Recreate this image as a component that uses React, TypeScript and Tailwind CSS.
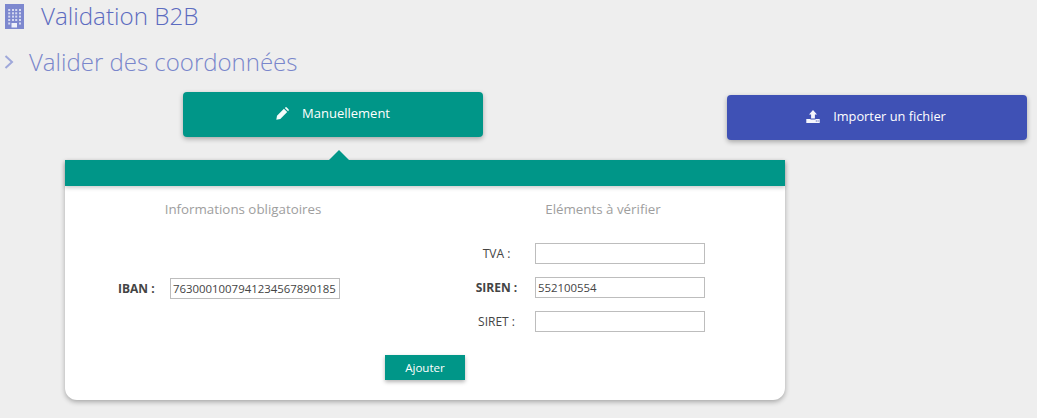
import React from "react";

const Building = () => (
  <svg width="19" height="25" viewBox="0 0 19 25" className="block">
    <rect x="0" y="0" width="19" height="25" fill="#7d88cf" />
    {[5, 8.3, 11.6, 15].map((y) =>
      [3.2, 7, 10.2, 14].map((x) => (
        <rect key={`${x}-${y}`} x={x} y={y} width="2" height="2" fill="#d5d9f0" />
      ))
    )}
    {[3.2, 14].map((x) => (
      <rect key={x} x={x} y="18.5" width="2" height="2" fill="#d5d9f0" />
    ))}
    <rect x="6.5" y="19" width="5.5" height="4.5" fill="#eef0fa" />
  </svg>
);

const Pencil = () => (
  <svg width="13" height="13" viewBox="0 0 13 13" className="block">
    <path d="M0.3 12.7 L1 8.7 L7.9 1.8 L11.2 5.1 L4.3 12 Z M8.8 0.9 L9.5 0.3 Q10 0 10.6 0.3 L12.7 2.4 Q13 3 12.7 3.5 L12.1 4.2 Z" fill="#f6fcfb" />
  </svg>
);

const Upload = () => (
  <svg width="14" height="13" viewBox="0 0 14 13" className="block">
    <path d="M7 0 L11 4.4 L8.9 4.4 L8.9 8.4 L5.1 8.4 L5.1 4.4 L3 4.4 Z" fill="#f5f6fc" />
    <path fillRule="evenodd" d="M0.3 9 L4.5 9 L4.5 9.6 L9.5 9.6 L9.5 9 L13.7 9 L13.7 13 L0.3 13 Z M9.8 10.6 h1 v1 h-1 Z M11.6 10.6 h1 v1 h-1 Z" fill="#f5f6fc" />
  </svg>
);

const Field = ({ label, value = "", bold = false }: { label: string; value?: string; bold?: boolean }) => (
  <div className="flex items-center h-[21px]">
    <div className={`w-[75px] mr-[1px] text-center text-[12px] leading-[21px] text-[#444] ${bold ? "font-bold" : ""}`}>{label}</div>
    <input
      readOnly
      value={value}
      className="w-[170px] h-[21px] border border-[#bdbdbd] bg-white px-[2px] text-[11.4px] text-[#444] outline-none"
    />
  </div>
);

export default function App() {
  return (
    <div className="w-[1037px] h-[418px] overflow-hidden bg-[#eeeeee] font-['Open_Sans','Noto_Sans',sans-serif]">
      <div className="flex items-center pl-[5px] pt-[4px] h-[28px]">
        <Building />
        <h1 className="ml-[17px] text-[24.2px] leading-[28px] font-light text-[#5c6bc0]">Validation B2B</h1>
      </div>
      <div className="flex items-center pl-[4px] mt-[16px] h-[36px]">
        <svg width="10" height="14" viewBox="0 0 10 14" className="block">
          <path d="M1.5 1 L8 7 L1.5 13" fill="none" stroke="#9fa8da" strokeWidth="2" />
        </svg>
        <h2 className="ml-[15px] text-[24px] leading-[36px] font-light text-[#7986cb]">Valider des coordonnées</h2>
      </div>
      <div className="flex items-start mt-[12px] h-[68px] pl-[183px]">
        <button className="flex items-center justify-center gap-[13px] w-[300px] h-[45px] pb-[2px] rounded-[4px] bg-[#009688] text-white text-[13px] shadow-[0_2px_5px_rgba(0,0,0,0.3)]">
          <Pencil />
          <span>Manuellement</span>
        </button>
        <button className="ml-[244px] mt-[3px] flex items-center justify-center gap-[13px] w-[300px] h-[45px] pb-[2px] pr-[2px] rounded-[4px] bg-[#3f51b5] text-white text-[12.8px] shadow-[0_2px_5px_rgba(0,0,0,0.3)]">
          <Upload />
          <span>Importer un fichier</span>
        </button>
      </div>
      <div className="relative ml-[65px] w-[720px] h-[240px] bg-white rounded-b-[12px] shadow-[0_2px_5px_rgba(0,0,0,0.3)]">
        <div className="absolute left-[264px] top-[-10px] w-0 h-0 border-x-[10px] border-x-transparent border-b-[10px] border-b-[#009688]" />
        <div className="h-[26px] bg-[#009688] shadow-[0_2px_4px_rgba(0,0,0,0.2)]" />
        <div className="flex pt-[14px]">
          <div className="w-[356px] flex flex-col">
            <div className="text-center text-[13.33px] leading-[18px] text-[#9e9e9e]">Informations obligatoires</div>
            <div className="flex items-center h-[21px] mt-[60px] pl-[53px]">
              <span className="text-[12px] font-bold text-[#444] w-[52px]">IBAN :</span>
              <input
                readOnly
                value="7630001007941234567890185"
                className="w-[170px] h-[21px] border border-[#bdbdbd] bg-white px-[2px] text-[11.4px] text-[#444] outline-none"
              />
            </div>
          </div>
          <div className="w-[364px] flex flex-col pl-[38px]">
            <div className="w-[288px] text-center text-[13.33px] leading-[18px] text-[#9e9e9e]">Eléments à vérifier</div>
            <div className="flex flex-col gap-[13px] mt-[25px]">
              <Field label="TVA :" />
              <Field label="SIREN :" value="552100554" bold />
              <Field label="SIRET :" />
            </div>
          </div>
        </div>
        <div className="flex justify-center mt-[23px]">
          <button className="w-[80px] h-[25px] bg-[#009688] text-white text-[11.6px] shadow-[0_2px_4px_rgba(0,0,0,0.3)]">Ajouter</button>
        </div>
      </div>
    </div>
  );
}
